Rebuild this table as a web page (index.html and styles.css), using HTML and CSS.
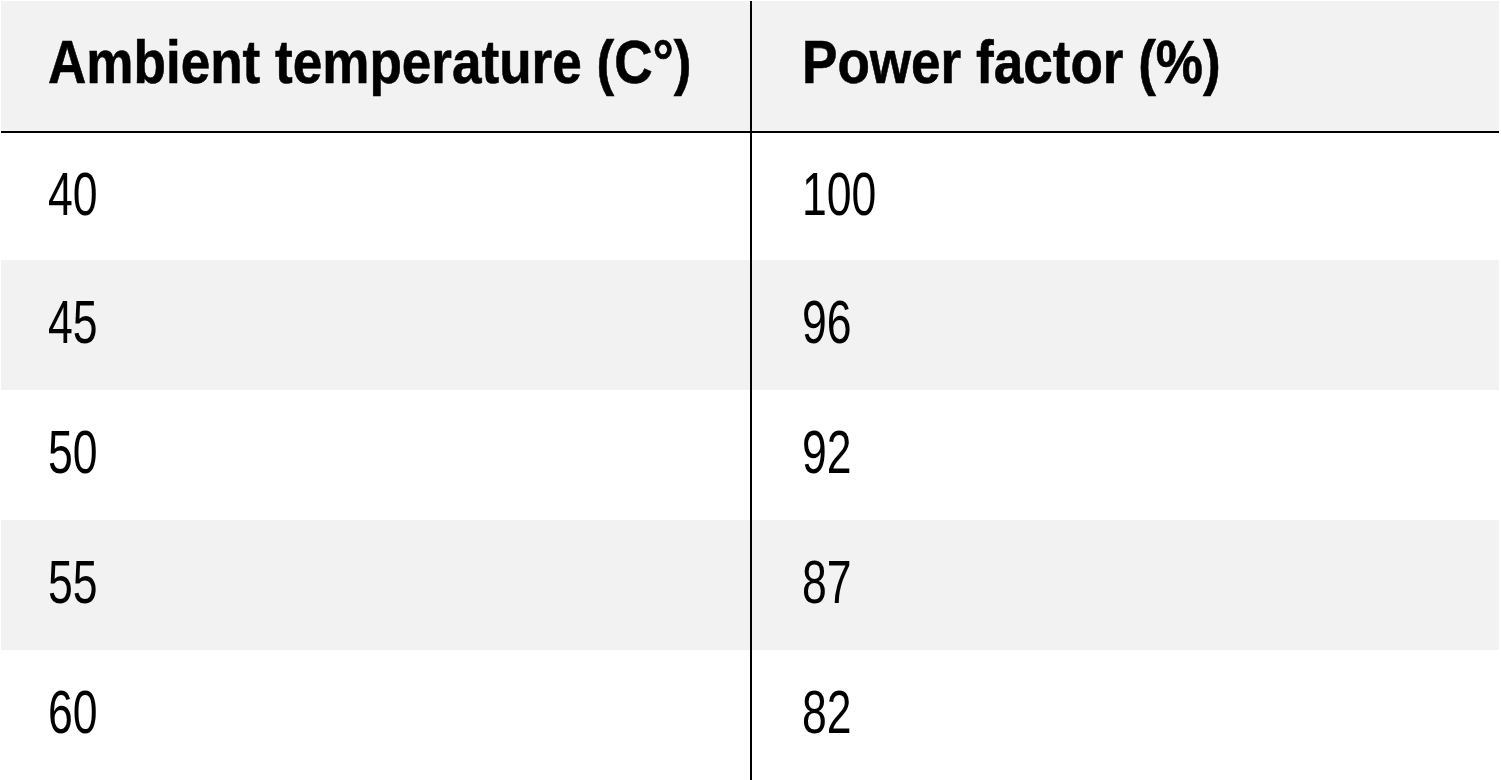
FILE: index.html
```html
<!DOCTYPE html>
<html lang="en">
<head>
    <meta charset="UTF-8">
    <meta name="viewport" content="width=device-width, initial-scale=1.0">
    <title>Power factor by ambient temperature</title>
    <link rel="stylesheet" href="styles.css">
</head>
<body>
    <table class="derating">
        <thead>
            <tr>
                <th><span class="narrow">Ambient temperature (C°)</span></th>
                <th><span class="narrow">Power factor (%)</span></th>
            </tr>
        </thead>
        <tbody>
            <tr><td><span class="narrow">40</span></td><td><span class="narrow">100</span></td></tr>
            <tr class="alt"><td><span class="narrow">45</span></td><td><span class="narrow">96</span></td></tr>
            <tr><td><span class="narrow">50</span></td><td><span class="narrow">92</span></td></tr>
            <tr class="alt"><td><span class="narrow">55</span></td><td><span class="narrow">87</span></td></tr>
            <tr><td><span class="narrow">60</span></td><td><span class="narrow">82</span></td></tr>
        </tbody>
    </table>
</body>
</html>
```

FILE: styles.css
```css
* {
    margin: 0;
    padding: 0;
    box-sizing: border-box;
}

html, body {
    background: #ffffff;
    overflow: hidden;
}

body {
    padding: 1px 0 0 1px;
    font-family: 'Liberation Sans', Arial, sans-serif;
    color: #000;
}

.derating {
    width: 1498px;
    border-collapse: collapse;
    table-layout: fixed;
}

.derating th,
.derating td {
    text-align: left;
    vertical-align: middle;
    padding: 0 0 0 47px;
    white-space: nowrap;
}

.derating th:first-child,
.derating td:first-child {
    width: 750px;
    border-right: 2px solid #000;
}

.derating th:last-child,
.derating td:last-child {
    padding-left: 50px;
}

/* 没有 Narrow 字体，用横向压缩代替 */
.narrow {
    display: inline-block;
    transform-origin: left center;
}

/* 表头 */
.derating thead tr {
    height: 131px;
    background: #f2f2f2;
    border-bottom: 2px solid #000;
}

.derating th {
    font-size: 61px;
    font-weight: 700;
    padding-bottom: 9px;
    -webkit-text-stroke: 0.6px #000;
}

.derating th .narrow {
    transform: scaleX(0.87);
}

.derating tbody tr {
    height: 130px;
}

.derating tbody tr:first-child {
    height: 128px;
}

.derating td {
    font-size: 61px;
    font-weight: 400;
    padding-bottom: 6px;
}

.derating td .narrow {
    transform: scaleX(0.73);
}

.derating tr.alt {
    background: #f2f2f2;
}
```
